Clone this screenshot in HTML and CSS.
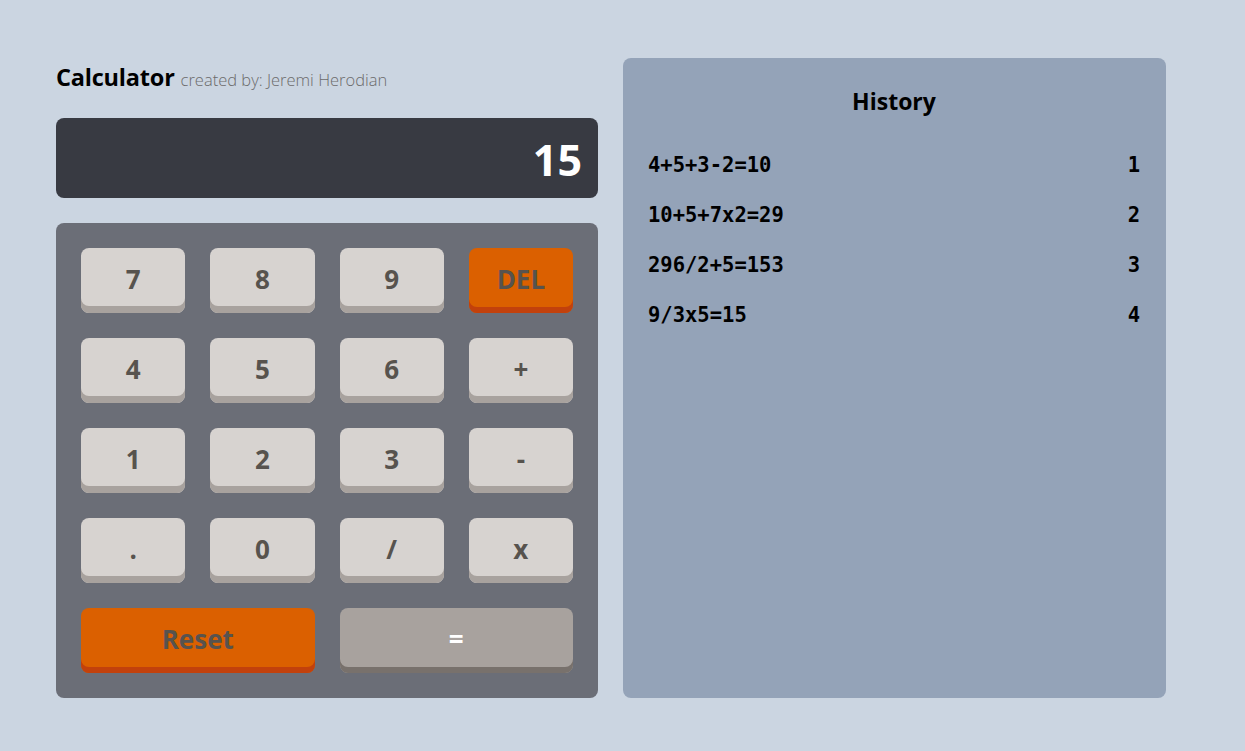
FILE: index.html
```html
<!DOCTYPE html>
<html lang="en">
<head>
<meta charset="utf-8">
<title>Calculator</title>
<link rel="stylesheet" href="styles.css">
</head>
<body>
<main class="page">
  <section class="calc">
    <h1 class="title">Calculator <span class="credit">created by: Jeremi Herodian</span></h1>
    <div class="display">15</div>
    <div class="keypad">
      <button class="key">7</button>
      <button class="key">8</button>
      <button class="key">9</button>
      <button class="key key-orange">DEL</button>
      <button class="key">4</button>
      <button class="key">5</button>
      <button class="key">6</button>
      <button class="key">+</button>
      <button class="key">1</button>
      <button class="key">2</button>
      <button class="key">3</button>
      <button class="key">-</button>
      <button class="key">.</button>
      <button class="key">0</button>
      <button class="key">/</button>
      <button class="key">x</button>
      <button class="key key-orange key-wide">Reset</button>
      <button class="key key-equals key-wide">=</button>
    </div>
  </section>
  <aside class="history">
    <h2 class="history-title">History</h2>
    <ul class="history-list">
      <li class="history-row"><span>4+5+3-2=10</span><span>1</span></li>
      <li class="history-row"><span>10+5+7x2=29</span><span>2</span></li>
      <li class="history-row"><span>296/2+5=153</span><span>3</span></li>
      <li class="history-row"><span>9/3x5=15</span><span>4</span></li>
    </ul>
  </aside>
</main>
</body>
</html>
```
FILE: styles.css
```css
* { box-sizing: border-box; }
html, body { margin: 0; padding: 0; }
body {
  background: #cbd5e1;
  font-family: "Open Sans", "Noto Sans", sans-serif;
  width: 1245px;
  height: 751px;
  overflow: hidden;
}
.page {
  display: flex;
  gap: 25px;
  padding: 58px 0 0 56px;
}
.calc {
  width: 542px;
  display: flex;
  flex-direction: column;
}
.title {
  margin: 0;
  height: 60px;
  padding-top: 1px;
  font-size: 23.5px;
  font-weight: 700;
  color: #000;
  line-height: 36px;
  letter-spacing: -0.2px;
}
.credit {
  font-size: 16.5px;
  font-weight: 300;
  color: #6b6b6b;
  letter-spacing: 0;
}
.display {
  height: 80px;
  background: #383a42;
  border-radius: 8px;
  color: #fff;
  font-size: 43px;
  font-weight: 700;
  text-align: right;
  padding: 0 16px;
  line-height: 84px;
  margin-bottom: 25px;
}
.keypad {
  background: #6b6e77;
  border-radius: 8px;
  padding: 25px;
  display: grid;
  grid-template-columns: repeat(4, 1fr);
  grid-auto-rows: 65px;
  gap: 25px;
  height: 475px;
}
.key {
  border: none;
  border-radius: 8px;
  background: #d7d3d0;
  box-shadow: inset 0 -7px 0 #a8a29e;
  color: #57534e;
  font-family: "Open Sans", "Noto Sans", sans-serif;
  font-size: 26px;
  font-weight: 700;
  padding: 0 0 3px 0;
  cursor: pointer;
}
.key-orange {
  background: #db6000;
  box-shadow: inset 0 -6px 0 #c2410c;
}
.key-equals {
  background: #a8a29e;
  box-shadow: inset 0 -6px 0 #78716c;
  color: #fff;
}
.key-wide { grid-column: span 2; }
.history {
  width: 543px;
  height: 640px;
  background: #94a3b8;
  border-radius: 8px;
  padding: 23px 26px 0 25px;
}
.history-title {
  margin: 0 0 19px 0;
  text-align: center;
  font-size: 23px;
  font-weight: 700;
  line-height: 40px;
  color: #000;
}
.history-list {
  list-style: none;
  margin: 0;
  padding: 0;
}
.history-row {
  display: flex;
  justify-content: space-between;
  font-family: "DejaVu Sans Mono", "Liberation Mono", monospace;
  font-weight: 700;
  font-size: 20.5px;
  line-height: 50px;
  color: #000;
}
```
